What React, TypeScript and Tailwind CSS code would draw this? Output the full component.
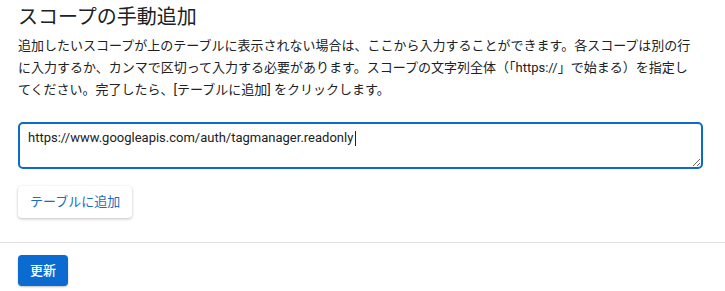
import { useState } from 'react';

const font = { fontFamily: 'Roboto, "Noto Sans CJK JP", sans-serif' };

export default function App() {
  const [scope, setScope] = useState('https://www.googleapis.com/auth/tagmanager.readonly');

  return (
    <div className="min-h-screen bg-white text-[#202124]" style={font}>
      <div className="pl-[18px] pr-[22px] pt-[3px]">
        <h2 className="text-[20px] font-normal leading-[28px]">スコープの手動追加</h2>
        <p className="mt-[4px] whitespace-nowrap text-[13px] leading-[22px]">
          追加したいスコープが上のテーブルに表示されない場合は、ここから入力することができます。各スコープは別の行
          <br />
          に入力するか、カンマで区切って入力する必要があります。スコープの文字列全体（「https://」で始まる）を指定し
          <br />
          てください。完了したら、[テーブルに追加] をクリックします。
        </p>
        <div className="relative mt-[21px]">
          <textarea
            value={scope}
            onChange={(e) => setScope(e.target.value)}
            className="block h-[47px] w-full rounded-[5px] border-2 border-[#0b6bcb] px-[8px] pt-[5px] text-[13px] leading-[18px] text-[#202124] outline-none"
            style={font}
          />
          <span className="pointer-events-none absolute left-[337px] top-[9px] h-[15px] w-px bg-[#202124]" />
        </div>
        <button
          type="button"
          className="mt-[17px] block h-[32px] rounded-[4px] bg-white px-[12px] text-[13px] text-[#1a6dc2] shadow-[0_1px_3px_rgba(0,0,0,0.25)]"
        >
          テーブルに追加
        </button>
      </div>
      <div className="mt-[24px] h-px w-full bg-[#e0e0e0]" />
      <div className="pl-[18px] pt-[12px]">
        <button
          type="button"
          className="block h-[31px] rounded-[4px] bg-[#0b6bd1] px-[12px] text-[13px] font-medium text-white shadow-[0_1px_2px_rgba(0,0,0,0.25)]"
        >
          更新
        </button>
      </div>
    </div>
  );
}
